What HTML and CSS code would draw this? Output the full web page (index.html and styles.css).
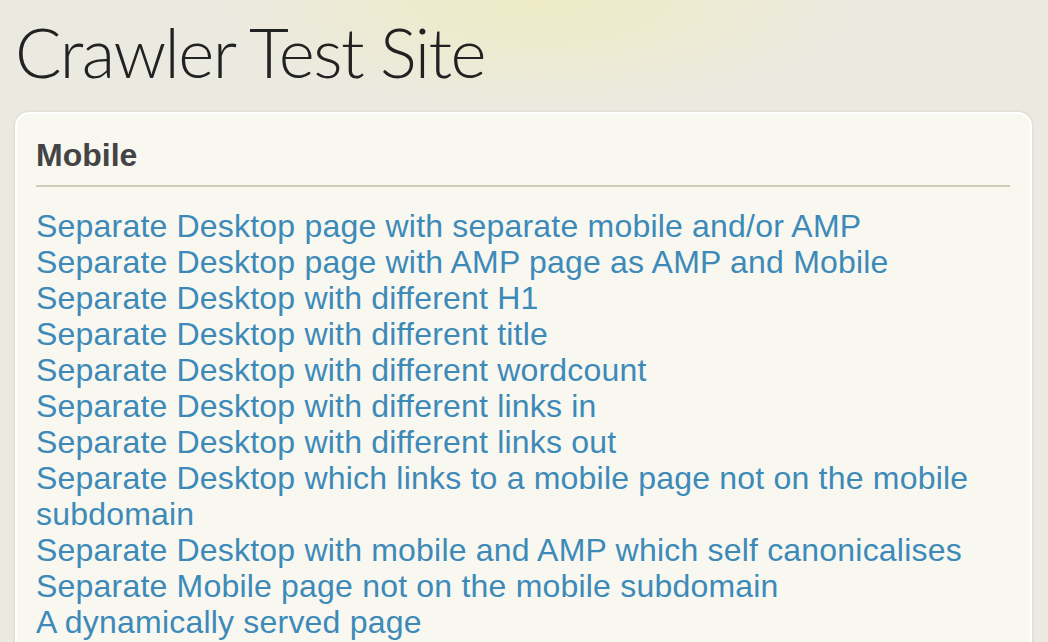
FILE: index.html
```html
<!DOCTYPE html>
<html lang="en">
<head>
<meta charset="utf-8">
<title>Crawler Test Site</title>
<link rel="stylesheet" href="styles.css">
</head>
<body>
<div class="page">
  <h1 class="site-title">Crawler Test Site</h1>
  <section class="card">
    <h2 class="card-title">Mobile</h2>
    <ul class="links">
      <li><a href="#">Separate Desktop page with separate mobile and/or AMP</a></li>
      <li><a href="#">Separate Desktop page with AMP page as AMP and Mobile</a></li>
      <li><a href="#">Separate Desktop with different H1</a></li>
      <li><a href="#">Separate Desktop with different title</a></li>
      <li><a href="#">Separate Desktop with different wordcount</a></li>
      <li><a href="#">Separate Desktop with different links in</a></li>
      <li><a href="#">Separate Desktop with different links out</a></li>
      <li><a href="#">Separate Desktop which links to a mobile page not on the mobile subdomain</a></li>
      <li><a href="#">Separate Desktop with mobile and AMP which self canonicalises</a></li>
      <li><a href="#">Separate Mobile page not on the mobile subdomain</a></li>
      <li><a href="#">A dynamically served page</a></li>
    </ul>
  </section>
</div>
</body>
</html>
```
FILE: styles.css
```css
html, body {
  margin: 0;
  padding: 0;
}
body {
  background-color: #ebeae0;
  background-image: radial-gradient(ellipse 320px 110px at 540px 0, #eeebc6 0%, rgba(238,235,198,0.6) 45%, rgba(235,234,224,0) 100%);
  font-family: "Liberation Sans", Arial, sans-serif;
  min-height: 642px;
  overflow: hidden;
}
.page {
  padding: 0 16px 0 15px;
}
.site-title {
  margin: 0;
  padding: 12px 0 0 0;
  font-family: Lato, Roboto, "Liberation Sans", sans-serif;
  font-weight: 300;
  font-size: 69px;
  line-height: 80px;
  color: #222;
  letter-spacing: -1.6px;
  height: 97px;
  box-sizing: border-box;
}
.card {
  margin-top: 15px;
  background: #f8f7f0;
  border: 2px solid #ffffff;
  border-radius: 14px;
  box-shadow: 0 0 3px rgba(0,0,0,0.14);
  padding: 23px 20px 30px 19px;
}
.card-title {
  margin: 0;
  font-size: 32px;
  line-height: 36px;
  font-weight: bold;
  color: #444;
  padding-bottom: 12px;
  border-bottom: 2px solid #cdccb6;
}
.links {
  list-style: none;
  margin: 21px 0 0 0;
  padding: 0;
}
.links li {
  font-size: 32px;
  line-height: 36px;
  letter-spacing: 0.2px;
}
.links a {
  color: #3d8ab9;
  text-decoration: none;
}
```
